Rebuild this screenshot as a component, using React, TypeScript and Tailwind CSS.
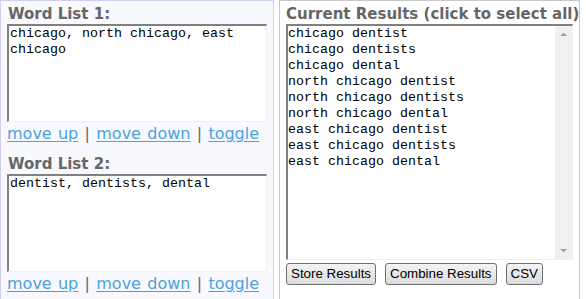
import { useState } from 'react';

const list1 = 'chicago, north chicago, east chicago';
const list2 = 'dentist, dentists, dental';

const results = [
  'chicago dentist',
  'chicago dentists',
  'chicago dental',
  'north chicago dentist',
  'north chicago dentists',
  'north chicago dental',
  'east chicago dentist',
  'east chicago dentists',
  'east chicago dental',
];

function LinkRow() {
  return (
    <div className="pt-[2px] leading-[19px] text-[16px] text-[#666666] font-['DejaVu_Sans',sans-serif] whitespace-nowrap [word-spacing:1.2px]">
      <a href="#" className="text-[#4aa3dc] underline underline-offset-[2px]">move up</a> | <a href="#" className="text-[#4aa3dc] underline underline-offset-[2px]">move down</a> | <a href="#" className="text-[#4aa3dc] underline underline-offset-[2px]">toggle</a>
    </div>
  );
}

function WordBox({ value }: { value: string }) {
  return (
    <textarea
      defaultValue={value}
      spellCheck={false}
      className="block w-[260px] h-[98px] resize-none bg-white border-solid border-t-2 border-l-2 border-r border-b border-t-[#808080] border-l-[#808080] border-r-[#f0f0f0] border-b-[#f0f0f0] p-0 pl-[1px] font-['Liberation_Mono',monospace] text-[13.33px] leading-[16px] text-black outline-none overflow-hidden"
    />
  );
}

function Btn({ label }: { label: string }) {
  return (
    <button className="h-[22px] px-[4px] border border-[#707070] rounded-[3px] bg-gradient-to-b from-[#f4f4f4] to-[#dcdcdc] font-['Liberation_Sans',Arial,sans-serif] text-[13.33px] text-black leading-none">
      {label}
    </button>
  );
}

export default function App() {
  const [selected, setSelected] = useState(false);

  return (
    <div className="w-[586px] h-[299px] bg-white flex overflow-hidden">
      {/* Word lists */}
      <div className="w-[274px] h-full bg-[#f8f8ff] border-l border-t border-r border-[#cfcff5] pl-[6px] pt-[4px]">
        <h2 className="font-['DejaVu_Sans',sans-serif] font-bold text-[15px] leading-[19px] text-[#666666] pl-[1px]">Word List 1:</h2>
        <WordBox value={list1} />
        <LinkRow />
        <h2 className="mt-[12px] font-['DejaVu_Sans',sans-serif] font-bold text-[15px] leading-[19px] text-[#666666] pl-[1px]">Word List 2:</h2>
        <WordBox value={list2} />
        <LinkRow />
      </div>

      {/* Results */}
      <div className="ml-[5px] w-[301px] h-full bg-white border-l border-t border-r border-[#c8c8c8] pl-[6px] pt-[4px]">
        <h2 className="font-['DejaVu_Sans',sans-serif] font-bold text-[15px] leading-[19px] text-[#666666] whitespace-nowrap">Current Results (click to select all)</h2>
        <div
          onClick={() => setSelected(true)}
          className="flex w-[287px] h-[236px] bg-white border-solid border-t-2 border-l-2 border-r border-b border-t-[#808080] border-l-[#808080] border-r-[#f0f0f0] border-b-[#f0f0f0]"
        >
          <div className={`flex-1 font-['Liberation_Mono',monospace] text-[13.33px] leading-[16px] text-black whitespace-pre ${selected ? 'bg-[#cce4ff]' : ''}`}>
            {results.join('\n')}
          </div>
          <div className="w-[17px] h-full bg-[#f0f0f0] flex flex-col justify-between items-center">
            <svg width="17" height="17" viewBox="0 0 17 17"><path d="M5 10 L8.5 6.5 L12 10 Z" fill="#a3a3a3" /></svg>
            <svg width="17" height="17" viewBox="0 0 17 17"><path d="M5 7 L8.5 10.5 L12 7 Z" fill="#a3a3a3" /></svg>
          </div>
        </div>
        <div className="flex gap-[9px] mt-[3px]">
          <Btn label="Store Results" />
          <Btn label="Combine Results" />
          <Btn label="CSV" />
        </div>
      </div>
    </div>
  );
}
